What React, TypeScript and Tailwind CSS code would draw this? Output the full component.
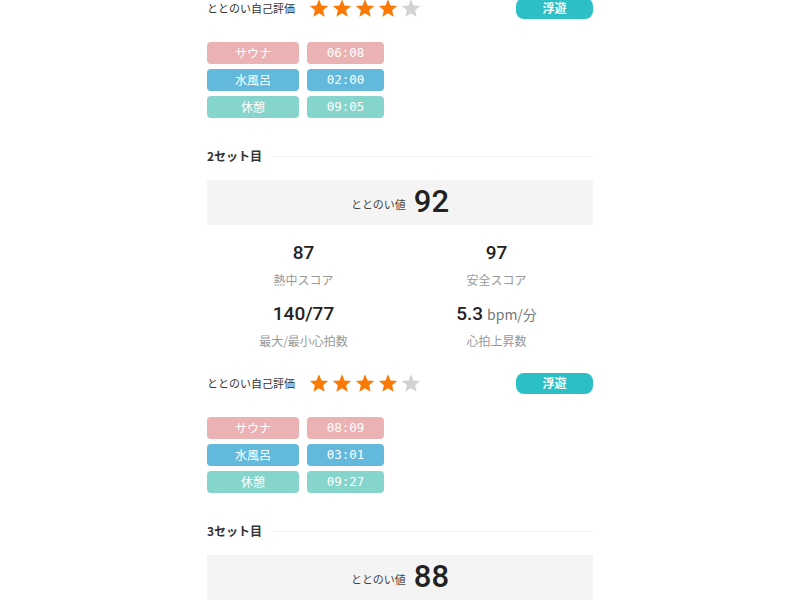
import React from 'react'

type SetData = {
  no: number
  score: number
  heat: number
  safety: number
  maxMin: string
  rise: string
  rating: number
  mood: string
  sauna: string
  water: string
  rest: string
}

const sets: SetData[] = [
  { no: 1, score: 90, heat: 85, safety: 95, maxMin: '138/75', rise: '5.1', rating: 4, mood: '浮遊', sauna: '06:08', water: '02:00', rest: '09:05' },
  { no: 2, score: 92, heat: 87, safety: 97, maxMin: '140/77', rise: '5.3', rating: 4, mood: '浮遊', sauna: '08:09', water: '03:01', rest: '09:27' },
  { no: 3, score: 88, heat: 84, safety: 93, maxMin: '136/74', rise: '4.9', rating: 4, mood: '浮遊', sauna: '07:30', water: '02:15', rest: '08:40' },
]

const jp = { fontFamily: '"Noto Sans CJK JP", "Noto Sans", sans-serif' }
const num = { fontFamily: 'Roboto, "Liberation Sans", "Noto Sans CJK JP", sans-serif' }
const mono = { fontFamily: '"DejaVu Sans Mono", "Liberation Mono", monospace' }

function Star({ on }: { on: boolean }) {
  return (
    <svg width="20" height="20" viewBox="0 0 24 24">
      <polygon
        points="12,1.5 15,8.9 23,9.6 16.9,14.8 18.8,22.6 12,18.4 5.2,22.6 7.1,14.8 1,9.6 9,8.9"
        fill={on ? '#fb7a05' : '#d2d2d2'}
      />
    </svg>
  )
}

function Stat({ value, unit, label }: { value: string | number; unit?: string; label: string }) {
  return (
    <div className="flex flex-col items-center">
      <div className="h-6 flex items-center gap-1 text-[#222]" style={num}>
        <span className="text-[19px] font-medium">{value}</span>
        {unit && (
          <span className="text-[14px] text-[#777]" style={jp}>
            {unit}
          </span>
        )}
      </div>
      <div className="mt-[7px] h-4 leading-4 text-[12px] text-[#999]" style={jp}>
        {label}
      </div>
    </div>
  )
}

function Pill({ color, children, mono: isMono }: { color: string; children: React.ReactNode; mono?: boolean }) {
  return (
    <div
      className={`h-[22px] rounded flex items-center justify-center text-white ${isMono ? 'text-[12.5px]' : 'text-[12px]'} ${color}`}
      style={isMono ? mono : jp}
    >
      {children}
    </div>
  )
}

function SetSection({ s }: { s: SetData }) {
  return (
    <section className="pb-[28px]">
      <div className="h-5 flex items-center gap-2.5">
        <span className="text-[12px] font-bold text-[#333]" style={jp}>
          {s.no}セット目
        </span>
        <div className="flex-1 h-px bg-[#f1f1f1]" />
      </div>

      <div className="mt-[14px] h-[45px] bg-[#f4f4f4] flex items-center justify-center gap-2">
        <span className="text-[11px] text-[#444] mt-1" style={jp}>
          ととのい値
        </span>
        <span className="text-[31px] font-medium text-[#222]" style={num}>
          {s.score}
        </span>
      </div>

      <div className="mt-4 grid grid-cols-2 gap-y-[14px]">
        <Stat value={s.heat} label="熱中スコア" />
        <Stat value={s.safety} label="安全スコア" />
        <Stat value={s.maxMin} label="最大/最小心拍数" />
        <Stat value={s.rise} unit="bpm/分" label="心拍上昇数" />
      </div>

      <div className="mt-[23px] h-[22px] flex items-center">
        <span className="text-[11px] text-[#333]" style={jp}>
          ととのい自己評価
        </span>
        <div className="ml-[14px] flex gap-[3px]">
          {[1, 2, 3, 4, 5].map(i => (
            <Star key={i} on={i <= s.rating} />
          ))}
        </div>
        <div
          className="ml-auto w-[77px] h-[21px] rounded-lg bg-[#2cbfc5] text-white text-[12px] font-bold flex items-center justify-center"
          style={jp}
        >
          {s.mood}
        </div>
      </div>

      <div className="mt-[23px] grid grid-cols-[92px_77px] gap-x-2 gap-y-[5px]">
        <Pill color="bg-[#ebb2b4]">サウナ</Pill>
        <Pill color="bg-[#ebb2b4]" mono>{s.sauna}</Pill>
        <Pill color="bg-[#63b9db]">水風呂</Pill>
        <Pill color="bg-[#63b9db]" mono>{s.water}</Pill>
        <Pill color="bg-[#86d5cc]">休憩</Pill>
        <Pill color="bg-[#86d5cc]" mono>{s.rest}</Pill>
      </div>
    </section>
  )
}

export default function App() {
  return (
    <div className="w-full h-[600px] overflow-hidden bg-white">
      <div className="mx-auto w-[386px] -mt-[229px]">
        {sets.map(s => (
          <SetSection key={s.no} s={s} />
        ))}
      </div>
    </div>
  )
}
